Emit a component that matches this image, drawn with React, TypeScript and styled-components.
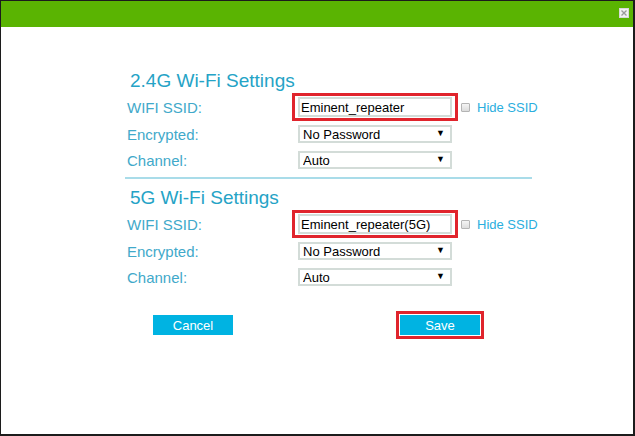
import React from "react";
import styled, { createGlobalStyle } from "styled-components";

const GlobalStyle = createGlobalStyle`
  html, body {
    margin: 0;
    padding: 0;
    background: #fff;
  }
  * {
    box-sizing: border-box;
  }
`;

const Dialog = styled.div`
  width: 635px;
  height: 436px;
  border-style: solid;
  border-color: #1c1c1c;
  border-width: 1px 2px 2px 1px;
  background: #fff;
  font-family: "Liberation Sans", Arial, sans-serif;
  display: flex;
  flex-direction: column;
`;

const TitleBar = styled.div`
  height: 26px;
  background: #5ab402;
  display: flex;
  justify-content: flex-end;
  align-items: flex-start;
  padding: 7px 4px 0 0;
`;

const CloseButton = styled.button`
  width: 10px;
  height: 10px;
  padding: 0;
  border: 1px solid #d8d8d8;
  background: #f2f2f2;
  display: flex;
  align-items: center;
  justify-content: center;
  cursor: pointer;
`;

const Content = styled.div`
  padding: 42px 0 0 124px;
  width: 531px;
  display: flex;
  flex-direction: column;
`;

const SectionTitle = styled.div<{ $top?: number }>`
  height: 24px;
  line-height: 24px;
  margin-top: ${(p) => p.$top ?? 0}px;
  padding-left: 5px;
  font-size: 19px;
  color: #25a3c6;
`;

const Row = styled.div<{ $h: number }>`
  height: ${(p) => p.$h}px;
  display: flex;
  align-items: center;
  white-space: nowrap;
`;

const Label = styled.div`
  width: 173px;
  flex-shrink: 0;
  padding-left: 2px;
  font-size: 15px;
  color: #41a9ca;
`;

const Highlight = styled.div`
  border: 3px solid #e0242c;
  padding: 1px 3px;
  margin-left: -6px;
  display: flex;
  flex-shrink: 0;
`;

const TextInput = styled.input`
  width: 154px;
  height: 20px;
  border: 2px solid #d3dcd8;
  padding: 0 1px;
  font-family: "Liberation Sans", Arial, sans-serif;
  font-size: 13px;
  color: #000;
  outline: none;
`;

const SelectWrap = styled.div`
  position: relative;
  width: 154px;
  height: 18px;
  flex-shrink: 0;
`;

const Select = styled.select`
  width: 100%;
  height: 100%;
  appearance: none;
  border: 2px solid #d3dcd8;
  border-radius: 0;
  background: #fff;
  padding: 0 3px;
  font-family: "Liberation Sans", Arial, sans-serif;
  font-size: 13px;
  color: #000;
  outline: none;
`;

const Arrow = styled.span`
  position: absolute;
  right: 7px;
  top: 4px;
  font-size: 9px;
  line-height: 9px;
  color: #000;
  pointer-events: none;
`;

const CheckLabel = styled.label`
  display: flex;
  align-items: center;
  flex-shrink: 0;
  margin-left: 3px;
  font-size: 13px;
  color: #2aaede;
`;

const Check = styled.span`
  width: 9px;
  height: 9px;
  border: 1px solid #b4b4b4;
  background: linear-gradient(#f4f4f4, #dcdcdc);
  border-radius: 1px;
  margin-right: 7px;
`;

const Divider = styled.div`
  height: 2px;
  margin-top: 4px;
  background: #a9dce9;
`;

const Actions = styled.div`
  margin-top: 21px;
  padding-left: 28px;
  display: flex;
  align-items: center;
  gap: 163px;
`;

const ActionButton = styled.button`
  width: 80px;
  height: 20px;
  border: none;
  padding: 0;
  background: #00b3e2;
  color: #fff;
  font-family: "Liberation Sans", Arial, sans-serif;
  font-size: 13px;
  cursor: pointer;
`;

const ButtonHighlight = styled.div`
  border: 3px solid #e0242c;
  padding: 1px;
  display: flex;
`;

const SelectField: React.FC<{ value: string; options: string[] }> = ({
  value,
  options,
}) => (
  <SelectWrap>
    <Select defaultValue={value}>
      {options.map((o) => (
        <option key={o}>{o}</option>
      ))}
    </Select>
    <Arrow>▼</Arrow>
  </SelectWrap>
);

const WifiSection: React.FC<{ title: string; ssid: string; top?: number }> = ({
  title,
  ssid,
  top,
}) => (
  <>
    <SectionTitle $top={top}>{title}</SectionTitle>
    <Row $h={28}>
      <Label>WIFI SSID:</Label>
      <Highlight>
        <TextInput defaultValue={ssid} />
      </Highlight>
      <CheckLabel>
        <Check />
        Hide SSID
      </CheckLabel>
    </Row>
    <Row $h={26}>
      <Label>Encrypted:</Label>
      <SelectField value="No Password" options={["No Password", "WPA2-PSK"]} />
    </Row>
    <Row $h={26}>
      <Label>Channel:</Label>
      <SelectField value="Auto" options={["Auto", "1", "6", "11"]} />
    </Row>
  </>
);

const App: React.FC = () => {
  return (
    <>
      <GlobalStyle />
      <Dialog>
        <TitleBar>
          <CloseButton aria-label="Close">
            <svg width="6" height="6" viewBox="0 0 6 6">
              <path d="M0.5 0.5L5.5 5.5M5.5 0.5L0.5 5.5" stroke="#9a9a9a" strokeWidth="1.3" />
            </svg>
          </CloseButton>
        </TitleBar>
        <Content>
          <WifiSection title="2.4G Wi-Fi Settings" ssid="Eminent_repeater" />
          <Divider />
          <WifiSection title="5G Wi-Fi Settings" ssid="Eminent_repeater(5G)" top={7} />
          <Actions>
            <ActionButton>Cancel</ActionButton>
            <ButtonHighlight>
              <ActionButton>Save</ActionButton>
            </ButtonHighlight>
          </Actions>
        </Content>
      </Dialog>
    </>
  );
};

export default App;
